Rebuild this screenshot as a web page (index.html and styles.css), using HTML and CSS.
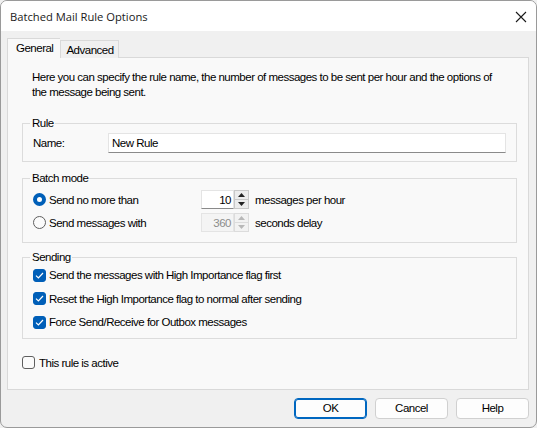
FILE: index.html
```html
<!DOCTYPE html>
<html>
<head>
<meta charset="utf-8">
<link rel="stylesheet" href="styles.css">
</head>
<body>
<div class="window">
  <div class="titlebar">
    <span class="title">Batched Mail Rule Options</span>
    <svg class="close" width="12" height="12" viewBox="0 0 12 12"><path d="M1 1L11 11M11 1L1 11" stroke="#1a1a1a" stroke-width="1.1" fill="none"/></svg>
  </div>
  <div class="body">
    <div class="tabs">
      <div class="tab active">General</div>
      <div class="tab">Advanced</div>
    </div>
    <div class="panel">
      <p class="desc">Here you can specify the rule name, the number of messages to be sent per hour and the options of the message being sent.</p>

      <fieldset class="group group-rule">
        <legend>Rule</legend>
        <div class="row name-row">
          <span class="name-label">Name:</span>
          <div class="textbox">New Rule</div>
        </div>
      </fieldset>

      <fieldset class="group group-batch">
        <legend>Batch mode</legend>
        <div class="row spin-row">
          <div class="opt">
            <span class="radio checked"></span>
            <span>Send no more than</span>
          </div>
          <div class="spin">
            <div class="spin-field">10</div>
            <div class="spin-btns">
              <div class="spin-btn"><svg width="7" height="4" viewBox="0 0 7 4"><path d="M0 4L3.5 0L7 4Z" fill="#222"/></svg></div>
              <div class="spin-btn"><svg width="7" height="4" viewBox="0 0 7 4"><path d="M0 0L3.5 4L7 0Z" fill="#222"/></svg></div>
            </div>
          </div>
          <span class="unit">messages per hour</span>
        </div>
        <div class="row spin-row">
          <div class="opt">
            <span class="radio"></span>
            <span>Send messages with</span>
          </div>
          <div class="spin disabled">
            <div class="spin-field">360</div>
            <div class="spin-btns">
              <div class="spin-btn"><svg width="7" height="4" viewBox="0 0 7 4"><path d="M0 4L3.5 0L7 4Z" fill="#b8b8b8"/></svg></div>
              <div class="spin-btn"><svg width="7" height="4" viewBox="0 0 7 4"><path d="M0 0L3.5 4L7 0Z" fill="#b8b8b8"/></svg></div>
            </div>
          </div>
          <span class="unit">seconds delay</span>
        </div>
      </fieldset>

      <fieldset class="group group-send">
        <legend>Sending</legend>
        <div class="row check-row">
          <span class="check checked"><svg width="9" height="7" viewBox="0 0 9 7"><path d="M1 3.6L3.4 6L8 1" stroke="#fff" stroke-width="1.2" fill="none"/></svg></span>
          <span>Send the messages with High Importance flag first</span>
        </div>
        <div class="row check-row">
          <span class="check checked"><svg width="9" height="7" viewBox="0 0 9 7"><path d="M1 3.6L3.4 6L8 1" stroke="#fff" stroke-width="1.2" fill="none"/></svg></span>
          <span>Reset the High Importance flag to normal after sending</span>
        </div>
        <div class="row check-row">
          <span class="check checked"><svg width="9" height="7" viewBox="0 0 9 7"><path d="M1 3.6L3.4 6L8 1" stroke="#fff" stroke-width="1.2" fill="none"/></svg></span>
          <span>Force Send/Receive for Outbox messages</span>
        </div>
      </fieldset>

      <div class="row active-row">
        <span class="check"></span>
        <span>This rule is active</span>
      </div>
    </div>
    <div class="buttons">
      <div class="btn default">OK</div>
      <div class="btn">Cancel</div>
      <div class="btn">Help</div>
    </div>
  </div>
</div>
</body>
</html>
```

FILE: styles.css
```css
* { box-sizing: border-box; }
html, body { margin: 0; padding: 0; background: #f0f0f0; }
body {
  font-family: "Liberation Sans", Arial, sans-serif;
  font-size: 11.5px;
  letter-spacing: -0.5px;
  color: #000;
}
.window {
  width: 537px;
  height: 428px;
  border: 1px solid #9a9a9a;
  border-radius: 7px;
  overflow: hidden;
  background: #f0f0f0;
}
.titlebar {
  height: 30px;
  background: #fff;
  display: flex;
  align-items: center;
  justify-content: space-between;
  padding: 0 9px 0 9px;
}
.title {
  font-family: "Open Sans", "Noto Sans", sans-serif;
  font-size: 11.2px;
  letter-spacing: 0;
  color: #1a1a1a;
  padding-top: 1px;
}
.close { margin-top: 1px; }
.body {
  padding: 7px 7px 0 6px;
}
.tabs {
  display: flex;
  align-items: flex-end;
  height: 20px;
  position: relative;
  z-index: 1;
}
.tab {
  height: 18px;
  border: 1px solid #d9d9d9;
  border-bottom: none;
  background: #f0f0f0;
  padding: 2px 4px 0 5px;
  line-height: 14px;
}
.tab.active {
  height: 21px;
  margin-bottom: -1px;
  background: #f9f9f9;
  padding: 2px 7px 0 8px;
  border-right: none;
}
.panel {
  height: 333px;
  width: 522px;
  border: 1px solid #d9d9d9;
  background: #f9f9f9;
  margin-top: -1px;
  padding: 12px 11px 0 14px;
}
.desc {
  margin: 0 0 0 10px;
  width: 472px;
  line-height: 15px;
  height: 46px;
}
.group {
  margin: 0;
  border: 1px solid #dcdcdc;
  padding: 0 0 0 7px;
  min-width: 0;
}
legend {
  padding: 0 1px 0 2px;
  line-height: 14px;
}
.row {
  display: flex;
  align-items: center;
  margin-left: 3px;
}
.group-rule { margin-top: 0; padding-bottom: 8px; }
.name-row { margin-top: 3px; }
.name-label { width: 75px; }
.textbox {
  flex: 1;
  margin-right: 10px;
  height: 20px;
  background: #fff;
  border: 1px solid #e4e4e4;
  border-bottom: 1px solid #8a8a8a;
  padding: 2px 0 0 3px;
  line-height: 14px;
}
.group-batch { margin-top: 9px; padding-bottom: 10px; }
.spin-row { margin-top: 5px; height: 19px; }
.spin-row + .spin-row { margin-top: 4px; }
.opt {
  width: 168px;
  display: flex;
  align-items: center;
  gap: 3px;
}
.radio {
  width: 13px;
  height: 13px;
  border-radius: 50%;
  border: 1px solid #5f5f5f;
  background: #fbfbfb;
  flex: none;
}
.radio.checked {
  border: 4px solid #005fb8;
  background: #fff;
}
.spin {
  display: flex;
  height: 19px;
  width: 48px;
}
.spin-field {
  width: 33px;
  height: 19px;
  background: #fff;
  border: 1px solid #e4e4e4;
  border-bottom: 1px solid #8a8a8a;
  text-align: right;
  padding: 2px 2px 0 0;
  line-height: 14px;
}
.spin-btns {
  width: 15px;
  height: 19px;
  display: flex;
  flex-direction: column;
  border: 1px solid #c8c8c8;
  background: #e6e6e6;
}
.spin-btn {
  flex: 1;
  display: flex;
  align-items: center;
  justify-content: center;
  background: #ececec;
}
.spin-btn + .spin-btn { border-top: 1px solid #c8c8c8; }
.spin.disabled .spin-field {
  background: #f4f4f4;
  color: #8c8c8c;
  border-color: #e4e4e4;
}
.spin.disabled .spin-btns { border-color: #dcdcdc; background: #f2f2f2; }
.spin.disabled .spin-btn { background: #f2f2f2; }
.spin.disabled .spin-btn + .spin-btn { border-top-color: #dcdcdc; }
.unit { margin-left: 6px; }
.group-send { margin-top: 7px; padding-bottom: 6px; }
.check-row { gap: 3px; height: 20px; margin-top: 1px; }
.check-row + .check-row { margin-top: 3.5px; }
.check {
  width: 13px;
  height: 13px;
  border-radius: 3px;
  border: 1px solid #5f5f5f;
  background: #fbfbfb;
  flex: none;
  display: flex;
  align-items: center;
  justify-content: center;
}
.check.checked {
  background: #005fb8;
  border-color: #005fb8;
}
.active-row { margin: 17px 0 0 0; gap: 4px; }
.buttons {
  display: flex;
  justify-content: flex-end;
  gap: 8px;
  margin-top: 8px;
  padding-right: 0;
}
.btn {
  width: 73px;
  height: 21px;
  border: 1px solid #d0d0d0;
  border-radius: 4px;
  background: #fdfdfd;
  text-align: center;
  line-height: 19px;
}
.btn.default {
  border: 1px solid #0067c0;
  box-shadow: inset 0 0 0 1px #0067c0;
}
```
